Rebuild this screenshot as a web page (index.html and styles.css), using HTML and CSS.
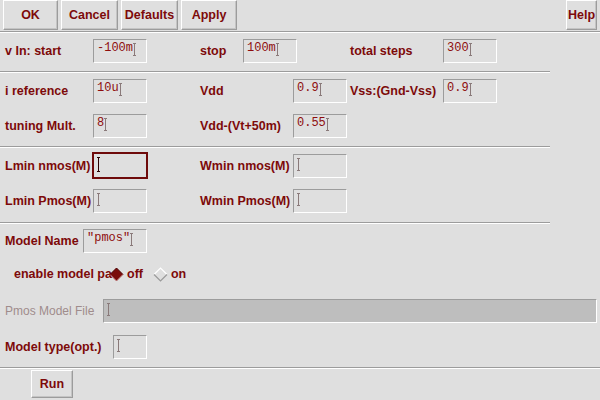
FILE: index.html
```html
<!DOCTYPE html>
<html lang="en">
<head>
    <meta charset="UTF-8">
    <title>DC Sweep Setup</title>
    <link rel="stylesheet" href="styles.css">
</head>
<body>
    <div class="dialog">
        <div class="toolbar">
            <button type="button" class="btn btn-ok">OK</button>
            <button type="button" class="btn btn-cancel">Cancel</button>
            <button type="button" class="btn btn-defaults">Defaults</button>
            <button type="button" class="btn btn-apply">Apply</button>
            <button type="button" class="btn btn-help">Help</button>
        </div>
        <div class="sep"></div>

        <!-- sweep -->
        <div class="section sec-sweep">
            <div class="row">
                <span class="label w88">v In: start</span>
                <span class="field"><span class="val">-100m</span><span class="caret"></span></span>
                <span class="label ml53 w43">stop</span>
                <span class="field"><span class="val">100m</span><span class="caret"></span></span>
                <span class="label ml53 w93">total steps</span>
                <span class="field"><span class="val">300</span><span class="caret"></span></span>
            </div>
        </div>
        <div class="sep short"></div>

        <!-- supplies -->
        <div class="section sec-supply">
            <div class="row">
                <span class="label w88">i reference</span>
                <span class="field"><span class="val">10u</span><span class="caret"></span></span>
                <span class="label ml53 w93">Vdd</span>
                <span class="field"><span class="val">0.9</span><span class="caret"></span></span>
                <span class="label w96 pl3">Vss:(Gnd-Vss)</span>
                <span class="field"><span class="val">0.9</span><span class="caret"></span></span>
            </div>
            <div class="row">
                <span class="label w88">tuning Mult.</span>
                <span class="field"><span class="val">8</span><span class="caret"></span></span>
                <span class="label ml53 w93">Vdd-(Vt+50m)</span>
                <span class="field"><span class="val">0.55</span><span class="caret"></span></span>
            </div>
        </div>
        <div class="sep short"></div>

        <!-- sizes -->
        <div class="section sec-size">
            <div class="row">
                <span class="label w88">Lmin nmos(M)</span>
                <span class="field focused"><span class="caret solid"></span></span>
                <span class="label ml53 w93">Wmin nmos(M)</span>
                <span class="field"><span class="caret"></span></span>
            </div>
            <div class="row">
                <span class="label w88 clip">Lmin Pmos(M)</span>
                <span class="field"><span class="caret"></span></span>
                <span class="label ml53 w93">Wmin Pmos(M)</span>
                <span class="field"><span class="caret"></span></span>
            </div>
        </div>
        <div class="sep short"></div>

        <!-- model -->
        <div class="section sec-model">
            <div class="row row-name">
                <span class="label w78">Model Name</span>
                <span class="field w64"><span class="val">"pmos"</span><span class="caret"></span></span>
            </div>
            <div class="row row-enable">
                <span class="label w95">enable model pa</span>
                <span class="radio">
                    <svg width="15" height="15" viewBox="0 0 15 15">
                        <polygon points="7.5,1 14,7.5 7.5,14 1,7.5" fill="#7a0c0c"/>
                        <polyline points="1,7.5 7.5,1 14,7.5" fill="none" stroke="#4a0000" stroke-width="1"/>
                        <polyline points="1,7.5 7.5,14 14,7.5" fill="none" stroke="#c08080" stroke-width="1"/>
                    </svg>
                    <span class="label">off</span>
                </span>
                <span class="radio">
                    <svg width="15" height="15" viewBox="0 0 15 15">
                        <polyline points="1,7.5 7.5,1 14,7.5" fill="none" stroke="#ffffff" stroke-width="1.2"/>
                        <polyline points="1,7.5 7.5,14 14,7.5" fill="none" stroke="#9a9a9a" stroke-width="1.2"/>
                    </svg>
                    <span class="label">on</span>
                </span>
            </div>
            <div class="row row-file">
                <span class="label w98 disabled">Pmos Model File</span>
                <span class="field wide"><span class="caret"></span></span>
            </div>
            <div class="row row-type">
                <span class="label w108">Model type(opt.)</span>
                <span class="field w34"><span class="caret"></span></span>
            </div>
        </div>
        <div class="sep"></div>

        <div class="run-bar">
            <button type="button" class="btn btn-run">Run</button>
        </div>
    </div>
</body>
</html>
```

FILE: styles.css
```css
body {
    margin: 0;
    padding: 0;
    background-color: #dfdfdf;
    font-family: 'Liberation Sans', Arial, sans-serif;
    color: #7d0a0a;
}
.dialog {
    width: 600px;
    height: 400px;
    overflow: hidden;
}
/* Buttons */
.toolbar {
    display: flex;
    gap: 3px;
    height: 31px;
    padding-left: 3px;
    box-sizing: border-box;
}
.btn {
    height: 30px;
    padding: 0;
    background-color: #dfdfdf;
    border: 1px solid;
    border-color: #ffffff #9c9c9c #9c9c9c #ffffff;
    box-shadow: inset -1px -1px 0 #c4c4c4;
    font-family: 'Liberation Sans', Arial, sans-serif;
    font-weight: bold;
    font-size: 12.5px;
    color: #7d0a0a;
}
.btn-ok { width: 55px; }
.btn-cancel { width: 57px; }
.btn-defaults { width: 57px; }
.btn-apply { width: 56px; }
.btn-help {
    width: 31px;
    margin-left: auto;
    margin-right: 3px;
}
/* Etched separators */
.sep {
    height: 0;
    border-top: 1px solid #9c9c9c;
    border-bottom: 1px solid #ffffff;
}
.sep.short {
    width: 550px;
}
/* Form rows */
.section {
    padding-left: 5px;
}
.sec-sweep { padding-bottom: 3px; }
.sec-supply { padding-bottom: 3px; }
.sec-size { padding-bottom: 4px; }
.sec-model { padding-bottom: 5px; }
.row {
    display: flex;
    align-items: center;
    height: 35px;
}
.row-name { height: 34px; }
.row-enable { height: 32px; padding-left: 9px; }
.row-file { height: 42px; }
.row-type { height: 30px; }
.label {
    font-weight: bold;
    font-size: 12.5px;
    white-space: nowrap;
    box-sizing: border-box;
    flex-shrink: 0;
}
.clip { overflow: hidden; }
.disabled {
    font-weight: normal;
    color: #a08c8c;
    font-size: 12px;
}
.w43 { width: 43px; }
.w78 { width: 78px; }
.w88 { width: 88px; }
.w93 { width: 93px; }
.w95 { width: 95px; }
.w96 { width: 96px; }
.w98 { width: 98px; }
.w108 { width: 108px; }
.ml53 { margin-left: 53px; }
.pl3 { padding-left: 3px; }
/* Text fields */
.field {
    display: flex;
    align-items: flex-start;
    width: 54px;
    height: 24px;
    padding: 2px 0 0 3px;
    box-sizing: border-box;
    flex-shrink: 0;
    border: 1px solid;
    border-color: #9c9c9c #ffffff #ffffff #9c9c9c;
    font-family: 'Liberation Mono', 'Courier New', monospace;
    font-size: 12px;
    line-height: 13px;
    color: #8e0d0d;
}
.field.w64 { width: 64px; }
.field.w34 { width: 34px; }
.field.wide {
    flex: 1;
    margin-right: 3px;
    background-color: #bebebe;
}
.field.focused {
    width: 56px;
    height: 27px;
    margin-left: -1px;
    margin-right: -1px;
    border: 2px solid #6e0a0a;
    padding-left: 3px;
}
.caret {
    display: inline-block;
    width: 3px;
    height: 11px;
    margin-top: 1px;
    border-top: 1px dotted #8a7a7a;
    border-bottom: 1px dotted #8a7a7a;
    background: linear-gradient(90deg, transparent 1px, #8a7a7a 1px, #8a7a7a 2px, transparent 2px);
}
.caret.solid {
    border-top: 1px solid #2a0000;
    border-bottom: 1px solid #2a0000;
    background: linear-gradient(90deg, transparent 1px, #2a0000 1px, #2a0000 2px, transparent 2px);
    height: 13px;
}
/* Radio group */
.radio {
    display: flex;
    align-items: center;
    gap: 3px;
    margin-right: 10px;
}
/* Bottom */
.run-bar {
    padding: 1px 0 0 31px;
}
.btn-run {
    width: 42px;
    height: 28px;
}
```
